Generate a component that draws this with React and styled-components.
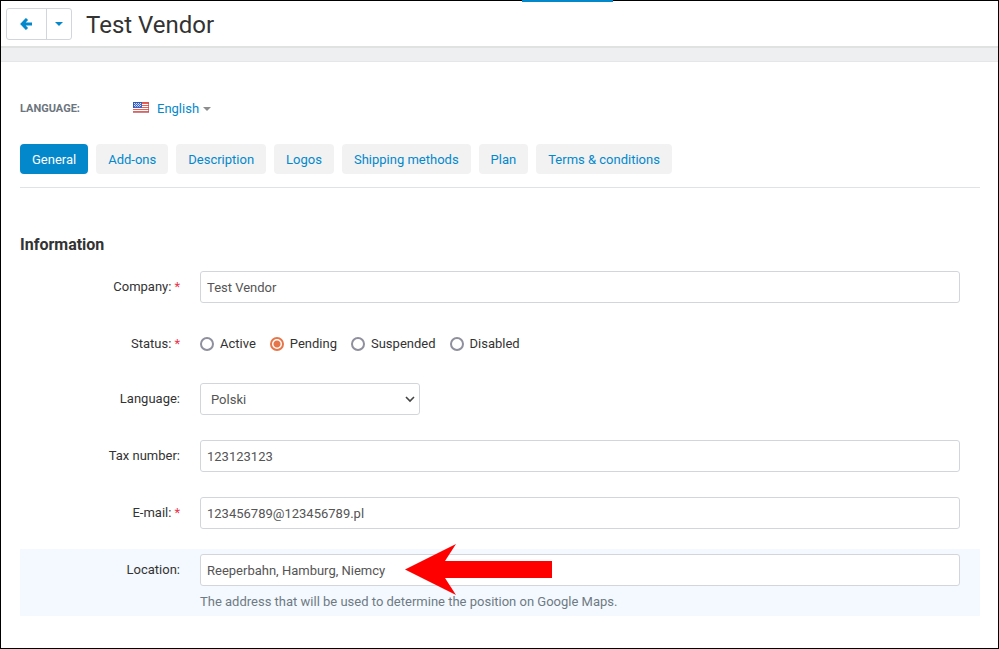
import React, { useState } from "react";
import styled, { createGlobalStyle } from "styled-components";

const GlobalStyle = createGlobalStyle`
  *, *::before, *::after { box-sizing: border-box; }
  body {
    margin: 0;
    background: #fff;
    color: #333;
    font: 13px/20px Roboto, "Liberation Sans", sans-serif;
  }
  button, input, select { font: inherit; margin: 0; }
`;

const Page = styled.div`
  position: relative;
  min-height: 100vh;
  border: 1px solid #000;
  background: #fff;
`;

const LoadingBar = styled.div`
  position: absolute;
  top: -1px;
  left: 521px;
  width: 91px;
  height: 2px;
  background: #0388cc;
`;

const Header = styled.header`
  display: flex;
  align-items: center;
  gap: 14px;
  height: 45px;
  padding: 0 5px;
`;

const ButtonGroup = styled.div`
  display: flex;
  height: 32px;
  border: 1px solid #d2d6da;
  border-radius: 3px;
`;

const GroupButton = styled.button`
  display: flex;
  align-items: center;
  justify-content: center;
  width: ${(p) => (p.$narrow ? 25 : 39)}px;
  padding: 0;
  border: 0;
  background: none;
  color: #0388cc;
  cursor: pointer;
  & + & { border-left: 1px solid #d2d6da; }
`;

const Title = styled.h1`
  margin: 0;
  padding-top: 2px;
  font-size: 24px;
  font-weight: 400;
  line-height: 32px;
`;

const Band = styled.div`
  height: 16px;
  border-top: 2px solid #e0e1e1;
  border-bottom: 1px solid #e4e6e8;
  background: #eeeff1;
`;

const Content = styled.main`
  padding: 37px 18px 32px 19px;
`;

const LanguageBar = styled.div`
  display: flex;
  align-items: center;
  height: 20px;
`;

const LanguageCaption = styled.span`
  width: 113px;
  color: #6c757d;
  font-size: 11px;
  font-weight: 700;
  text-transform: uppercase;
`;

const LanguageButton = styled.button`
  display: flex;
  align-items: center;
  padding: 0;
  border: 0;
  background: none;
  color: #0388cc;
  cursor: pointer;
`;

const Flag = styled.svg`
  margin: 0 8px 4px 0;
`;

const Caret = styled.span`
  margin-left: ${(p) => (p.$muted ? 4 : 0)}px;
  border: 4px solid transparent;
  border-top-color: ${(p) => (p.$muted ? "#8d8d8d" : "#0388cc")};
  border-bottom: 0;
`;

const Tabs = styled.nav`
  display: flex;
  flex-wrap: wrap;
  gap: 8px;
  margin-top: 25px;
  padding-bottom: 13px;
  border-bottom: 1px solid #dfe3e6;
`;

const Tab = styled.a`
  padding: 6px 12px 4px;
  border-radius: 4px;
  background: ${(p) => (p.$active ? "#0388cc" : "#f2f2f2")};
  color: ${(p) => (p.$active ? "#fff" : "#0388cc")};
  text-decoration: none;
`;

const SectionTitle = styled.h2`
  margin: 47px 0 11px;
  font-size: 16px;
  font-weight: 700;
  line-height: 20px;
`;

const Form = styled.form`
  display: flex;
  flex-direction: column;
  gap: 15px;
`;

const Row = styled.div`
  position: relative;
  display: grid;
  grid-template-columns: 160px minmax(0, 1fr);
  column-gap: 20px;
  align-items: start;
  padding: 5px 20px 5px 0;
  background: ${(p) => (p.$highlight ? "#f3f9ff" : "transparent")};
`;

const LabelCell = styled.div`
  padding-top: 6px;
  text-align: right;
`;

const Required = styled.span`
  margin-left: 3px;
  color: #e8354d;
`;

const TextInput = styled.input`
  display: block;
  width: 100%;
  height: 32px;
  padding: 1px 6px 0;
  border: 1px solid #d2d6da;
  border-radius: 3px;
  background: #fff;
  color: #555;
`;

const SelectWrap = styled.div`
  position: relative;
  width: 220px;
`;

const Select = styled.select`
  display: block;
  width: 100%;
  height: 32px;
  padding: 1px 24px 0 10px;
  appearance: none;
  border: 1px solid #d2d6da;
  border-radius: 3px;
  background: #fff;
  color: #555;
`;

const Chevron = styled.svg`
  position: absolute;
  top: 12px;
  right: 5px;
  pointer-events: none;
`;

const RadioGroup = styled.div`
  display: flex;
  flex-wrap: wrap;
  gap: 14px;
  padding: 6px 0 4px;
`;

const RadioLabel = styled.label`
  display: flex;
  align-items: center;
  gap: 6px;
`;

const Radio = styled.input`
  width: 14px;
  height: 14px;
  appearance: none;
  border: 2px solid #8f8f9d;
  border-radius: 50%;
  background: #fff;
  &:checked {
    border-color: #e67649;
    background: radial-gradient(circle, #e67649 3px, #fff 4px);
  }
`;

const Hint = styled.p`
  margin: 6px 0 -1px;
  color: #6f7a83;
`;

const Pointer = styled.svg`
  position: absolute;
  top: -5px;
  left: 385px;
  pointer-events: none;
`;

const tabs = ["General", "Add-ons", "Description", "Logos", "Shipping methods", "Plan", "Terms & conditions"];
const statuses = ["Active", "Pending", "Suspended", "Disabled"];

function UsFlag() {
  return (
    <Flag width="16" height="11" viewBox="0 0 16 11" shapeRendering="crispEdges" aria-hidden="true">
      <rect width="16" height="11" fill="#fff" />
      {[1, 3, 5, 7, 9].map((y) => (
        <rect key={y} y={y} width="16" height="1" fill="#e8605a" />
      ))}
      <rect width="9" height="6" fill="#3f66c4" />
      {[1, 3, 5, 7].map((x) => (
        <path key={x} d={`M${x} 1h1v1h-1zM${x} 3h1v1h-1z`} fill="#dce6ff" />
      ))}
      {[2, 4, 6].map((x) => (
        <path key={x} d={`M${x} 2h1v1h-1zM${x} 4h1v1h-1z`} fill="#a9bff0" />
      ))}
      <path d="M0 10h16v1h-16zM15 0h1v11h-1z" fill="#b5505a" fillOpacity=".7" />
      <path d="M9 0h7v1h-7z" fill="#d9534f" />
      <path d="M0 0h9v1h-9zM0 0h1v6h-1z" fill="#3558b0" />
    </Flag>
  );
}

function Field({ id, label, required, highlight, children }) {
  return (
    <Row $highlight={highlight}>
      <LabelCell>
        <label htmlFor={id} id={`${id}-label`}>
          {label}:{required && <Required>*</Required>}
        </label>
      </LabelCell>
      {children}
    </Row>
  );
}

export default function App() {
  const [status, setStatus] = useState("Pending");
  return (
    <Page>
      <GlobalStyle />
      <LoadingBar />
      <Header>
        <ButtonGroup>
          <GroupButton type="button" aria-label="Back">
            <svg width="13" height="12" viewBox="0 0 13 12" fill="none" stroke="currentColor" strokeWidth="3" aria-hidden="true">
              <path d="M7 1 2.2 6 7 11M2.5 6H12" />
            </svg>
          </GroupButton>
          <GroupButton type="button" $narrow aria-label="More">
            <Caret />
          </GroupButton>
        </ButtonGroup>
        <Title>Test Vendor</Title>
      </Header>
      <Band />
      <Content>
        <LanguageBar>
          <LanguageCaption>Language:</LanguageCaption>
          <LanguageButton type="button">
            <UsFlag />
            English
            <Caret $muted />
          </LanguageButton>
        </LanguageBar>
        <Tabs>
          {tabs.map((name, i) => (
            <Tab key={name} href="#" $active={i === 0}>{name}</Tab>
          ))}
        </Tabs>
        <SectionTitle>Information</SectionTitle>
        <Form>
          <Field id="company" label="Company" required>
            <TextInput id="company" defaultValue="Test Vendor" />
          </Field>
          <Row>
            <LabelCell id="status-label">Status:<Required>*</Required></LabelCell>
            <RadioGroup role="radiogroup" aria-labelledby="status-label">
              {statuses.map((name) => (
                <RadioLabel key={name}>
                  <Radio type="radio" name="status" checked={status === name} onChange={() => setStatus(name)} />
                  {name}
                </RadioLabel>
              ))}
            </RadioGroup>
          </Row>
          <Field id="language" label="Language">
            <SelectWrap>
              <Select id="language" defaultValue="Polski">
                <option>Polski</option>
                <option>English</option>
              </Select>
              <Chevron width="10" height="8" viewBox="0 0 10 8" fill="none" stroke="#444" strokeWidth="1.6" aria-hidden="true">
                <path d="M1 2l4 4 4-4" />
              </Chevron>
            </SelectWrap>
          </Field>
          <Field id="tax" label="Tax number">
            <TextInput id="tax" defaultValue="123123123" />
          </Field>
          <Field id="email" label="E-mail" required>
            <TextInput id="email" type="email" defaultValue="123456789@123456789.pl" />
          </Field>
          <Field id="location" label="Location" highlight>
            <div>
              <TextInput id="location" defaultValue="Reeperbahn, Hamburg, Niemcy" aria-describedby="location-hint" />
              <Hint id="location-hint">The address that will be used to determine the position on Google Maps.</Hint>
            </div>
            <Pointer width="148" height="52" viewBox="0 0 148 52" aria-hidden="true">
              <path d="M0 25.5 51 0 40 17h107v17H40l11 17z" fill="#f00" />
            </Pointer>
          </Field>
        </Form>
      </Content>
    </Page>
  );
}
